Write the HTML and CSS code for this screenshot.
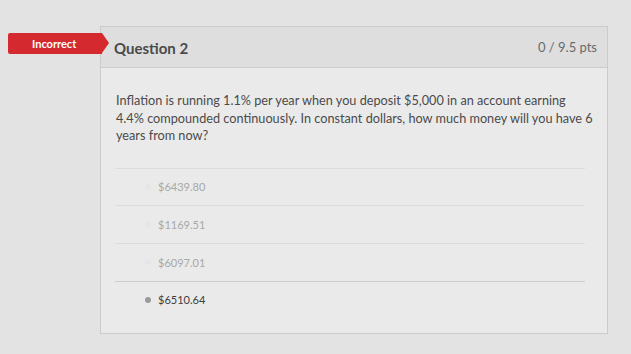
FILE: index.html
```html
<!DOCTYPE html>
<html lang="en">
<head>
  <meta charset="UTF-8" />
  <title>Quiz Results</title>
  <link rel="stylesheet" href="styles.css">
</head>
<body>

  <!-- Question 2 -->
  <div class="question-wrap">
    <div class="badge">Incorrect</div>

    <div class="question">
      <div class="question-header">
        <span class="question-name">Question 2</span>
        <span class="points">0 / 9.5 pts</span>
      </div>

      <div class="question-text">
        Inflation is running 1.1% per year when you deposit $5,000 in an account earning<br>
        4.4% compounded continuously. In constant dollars, how much money will you have 6<br>
        years from now?
      </div>

      <div class="answers">
        <div class="answer"><span class="radio"></span>$6439.80</div>
        <div class="answer"><span class="radio"></span>$1169.51</div>
        <div class="answer"><span class="radio"></span>$6097.01</div>
        <div class="answer selected"><span class="radio"></span>$6510.64</div>
      </div>
    </div>
  </div>

</body>
</html>
```

FILE: styles.css
```css
* {
  box-sizing: border-box;
  margin: 0;
  padding: 0;
}

html, body {
  font-family: 'Lato', 'Open Sans', sans-serif;
  background: #e3e3e3;
  color: #3d3d3d;
}

body {
  padding-top: 26px;
}

.question-wrap {
  position: relative;
}

/* red ribbon that sticks out left of the card */
.badge {
  position: absolute;
  left: 8px;
  top: 7px;
  width: 94px;
  height: 21px;
  background: #d42a2f;
  color: #fff;
  font-size: 11px;
  font-weight: bold;
  line-height: 21px;
  padding-left: 24px;
  border-radius: 2px 0 0 2px;
  z-index: 2;
}

.badge::after {
  content: "";
  position: absolute;
  right: -7px;
  top: 0;
  border-top: 10.5px solid transparent;
  border-bottom: 10.5px solid transparent;
  border-left: 7px solid #d42a2f;
}

.question {
  margin-left: 100px;
  width: 508px;
  background: #eaeaea;
  border: 1px solid #cbcbcb;
  padding-bottom: 15px;
}

.question-header {
  display: flex;
  justify-content: space-between;
  align-items: center;
  height: 41px;
  padding: 0 10px 0 13px;
  background: #dedede;
  border-bottom: 1px solid #cdcdcd;
}

.question-name {
  font-size: 15px;
  font-weight: bold;
  color: #4a4a4a;
  padding-top: 2px;
}

.points {
  font-size: 13px;
  color: #6a6a6a;
  padding-bottom: 1px;
}

.question-text {
  padding: 24px 0 23px 15px;
  font-size: 12.7px;
  line-height: 17.5px;
  color: #4a4a4a;
  white-space: nowrap;
}

.answers {
  margin: 0 22px 0 14px;
}

.answer {
  display: flex;
  align-items: center;
  height: 37.7px;
  border-top: 1px solid #dcdcdc;
  padding-left: 30px;
  font-size: 11px;
  color: #a8a8a8;
}

.answer .radio {
  width: 6px;
  height: 6px;
  border-radius: 50%;
  margin-right: 7px;
  background: #e6e6e6;
}

.answer.selected {
  border-top-color: #cccccc;
  color: #3d3d3d;
}

.answer.selected .radio {
  background: #9a9a9a;
}
```
